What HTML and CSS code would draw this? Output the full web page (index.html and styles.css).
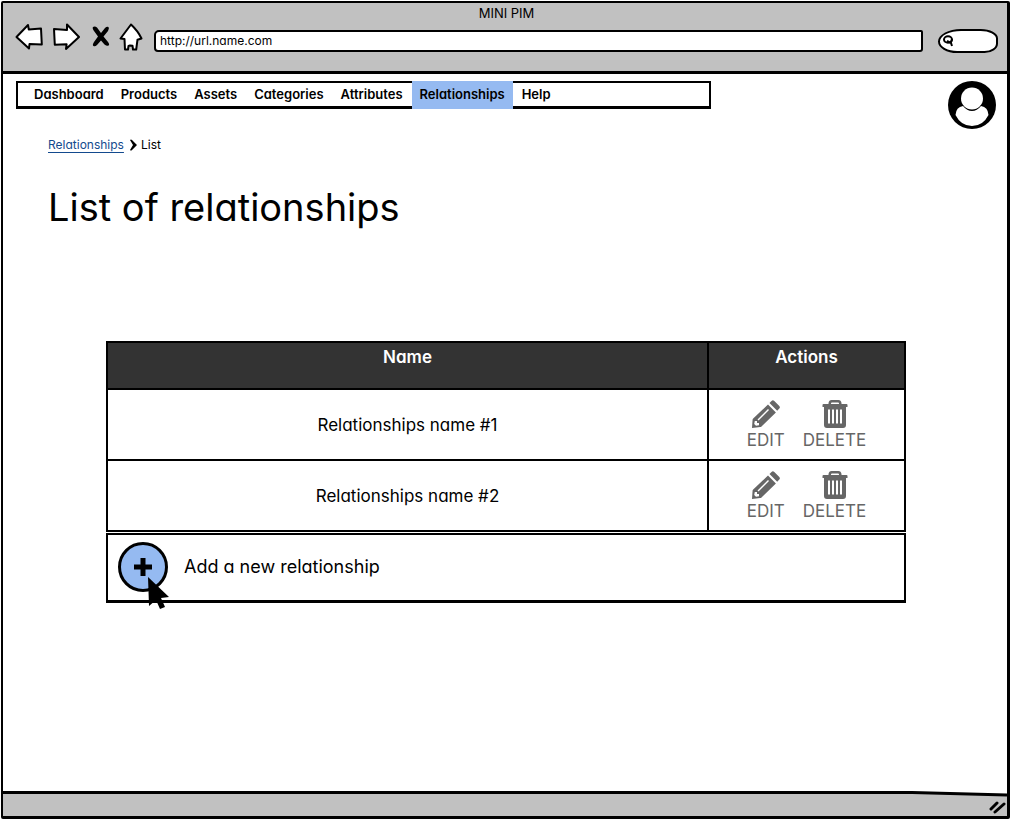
FILE: index.html
```html
<!DOCTYPE html>
<html lang="en">
<head>
<meta charset="utf-8">
<meta name="viewport" content="width=device-width, initial-scale=1">
<title>MINI PIM</title>
<link rel="stylesheet" href="styles.css">
</head>
<body>
<svg class="sprite" aria-hidden="true">
  <symbol id="pencil" viewBox="0 0 28 28">
    <path d="M17.500 3l2-2q1.400-1.400 2.800 0l5 5q1.200 1.300 0 2.600l-2.100 2.100z"/>
    <path fill-rule="evenodd" d="M16 4.500l7.900 7.900L9.500 26.500q-.5.500-1.200.6L0 28l.6-8.500q.1-.6.600-1.100zM16 9L5.500 19.500l1 1L17 10zM2.800 21l-.6 3 1.800 1.800 3-.6V23H5v-2z"/>
  </symbol>
  <symbol id="trash" viewBox="0 0 26 28">
    <path fill-rule="evenodd" d="M6.500 4V3Q7 0 9.500 0h7q2.500 0 3 3v1h5q1 0 1 1v2H.5V5q0-1 1-1zm2.500 0h8V3.500q0-1-1-1h-6q-1 0-1 1z"/>
    <path fill-rule="evenodd" d="M2 6.500h22V25q0 3-3 3H5q-3 0-3-3zM6 9.500v14h2v-14zm4 0v14h2v-14zm4 0v14h2v-14zm4 0v14h2v-14z"/>
  </symbol>
</svg>
<div class="window">
  <header class="chrome">
    <div class="chrome-title">MINI PIM</div>
    <div class="toolbar">
      <div class="controls">
        <button class="tool" aria-label="Back"><svg width="28" height="28" viewBox="0 0 28 28"><path class="outline" d="M1.500 14L13 2l.8 4.500L26 5.500l.8 16-12.300-.5-.5 4.500z"/></svg></button>
        <button class="tool" aria-label="Forward"><svg width="28" height="28" viewBox="0 0 28 28"><path class="outline" d="M27 14L15 1.500V7L2 6l.8 15.800 11.800-.5L14 26z"/></svg></button>
        <button class="tool tool-stop" aria-label="Stop"><svg width="18" height="22" viewBox="0 0 18 22"><path d="M1 1q2-1 4 .5L9 7l4-5q2-2 3.500-1 1 1-.5 4l-4.500 5.500L16 16q2 3 .5 3.500-1.500 1-4-1L9 14.500 5 19q-2 2-3.500 1t.5-4l4-5.500L2 5Q0 2 1 1z"/></svg></button>
        <button class="tool" aria-label="Home"><svg width="24" height="28" viewBox="0 0 24 28"><path class="outline" d="M12 1.500L1.500 15.500l4 .6.5 10.400h3l.5-3.500 1.500-.5 2.500.2.500 3.800h3.200l1.300-9.800 4-1.200Q19 8 12 1.500z"/></svg></button>
      </div>
      <input class="address" type="text" value="http://url.name.com" aria-label="Address">
      <div class="search">
        <svg width="12" height="14" viewBox="0 0 12 14" aria-hidden="true"><ellipse cx="6" cy="5.500" rx="4" ry="3.200"/><path d="M5 7l4 2 1 3M10 5L9 8"/></svg>
        <input class="search-input" type="search" aria-label="Search">
      </div>
    </div>
  </header>
  <div class="page">
    <div class="topbar">
      <nav class="menu" aria-label="Main">
        <a href="#">Dashboard</a>
        <a href="#">Products</a>
        <a href="#">Assets</a>
        <a href="#">Categories</a>
        <a href="#">Attributes</a>
        <a class="active" href="#" aria-current="page">Relationships</a>
        <a href="#">Help</a>
      </nav>
      <button class="account" aria-label="Account"><svg width="48" height="48" viewBox="0 0 48 48"><circle cx="24" cy="24" r="24"/><path fill="#fff" d="M7.500 34Q8 26 15 25q4 5 9 5t9-5q7 1 7.500 9Q35 45 24 45T7.500 34z"/><circle cx="24" cy="17.500" r="11" fill="#fff"/></svg></button>
    </div>
    <main class="content">
      <nav class="crumbs" aria-label="Breadcrumb">
        <a href="#">Relationships</a>
        <svg width="7" height="12" viewBox="0 0 7 12" aria-hidden="true"><path d="M0 1q1-1 2 0l5 5-5 5q-1 1-2 0l3-5z"/></svg>
        <span>List</span>
      </nav>
      <h1>List of relationships</h1>
      <div class="listing">
        <table>
          <thead>
            <tr><th scope="col">Name</th><th scope="col" class="col-actions">Actions</th></tr>
          </thead>
          <tbody>
            <tr>
              <td>Relationships name #1</td>
              <td><div class="actions">
                <button class="action"><svg width="28" height="28" aria-hidden="true"><use href="#pencil"/></svg>EDIT</button>
                <button class="action"><svg width="26" height="28" aria-hidden="true"><use href="#trash"/></svg>DELETE</button>
              </div></td>
            </tr>
            <tr>
              <td>Relationships name #2</td>
              <td><div class="actions">
                <button class="action"><svg width="28" height="28" aria-hidden="true"><use href="#pencil"/></svg>EDIT</button>
                <button class="action"><svg width="26" height="28" aria-hidden="true"><use href="#trash"/></svg>DELETE</button>
              </div></td>
            </tr>
          </tbody>
        </table>
        <div class="add-row">
          <button class="add" id="add" aria-labelledby="add-label">
            <svg width="20" height="20" viewBox="0 0 20 20" aria-hidden="true"><path d="M10 1v18M1 10h18"/></svg>
            <svg class="pointer" width="21" height="32" viewBox="0 0 21 32" aria-hidden="true"><path d="M0 0l21 20-8 1 4 9-5 2-4-9-7 6z"/></svg>
          </button>
          <label id="add-label" for="add">Add a new relationship</label>
        </div>
      </div>
    </main>
  </div>
  <footer class="statusbar">
    <svg class="edge" viewBox="0 0 1005 8" preserveAspectRatio="none" aria-hidden="true"><path class="paper" d="M0 0H1005V4L910 1.500H0z"/><path class="line" d="M0 1.500H910L1005 4"/></svg>
    <svg class="grip" width="17" height="14" viewBox="0 0 17 14" aria-hidden="true"><path d="M2 9l6-6M6 12l9-8"/></svg>
  </footer>
</div>
</body>
</html>
```
FILE: styles.css
```css
* {
  box-sizing: border-box;
}

body {
  margin: 0;
  padding: 1px;
  background: #fff;
  color: #000;
  font-family: Inter, "Open Sans", sans-serif;
  font-feature-settings: "cv11", "ss03";
  font-size: 12px;
  line-height: 16px;
}

button,
input {
  font: inherit;
  font-feature-settings: inherit;
  color: inherit;
}

button {
  padding: 0;
  border: 0;
  background: none;
  cursor: pointer;
}

svg {
  display: block;
}

.sprite {
  position: absolute;
  width: 0;
  height: 0;
}

.window {
  display: flex;
  flex-direction: column;
  min-height: calc(100vh - 2px);
  border: 3px solid #000;
  border-width: 2px 3px 3px 2px;
  border-radius: 2px;
}

.chrome {
  padding: 2px 9px 18px 12px;
  background: #c1c1c1;
  border-bottom: 3px solid #000;
}

.chrome-title {
  font-size: 13px;
  text-align: center;
}

.toolbar {
  display: flex;
  align-items: center;
  margin-top: 2px;
}

.controls {
  display: flex;
  align-items: center;
  gap: 9px;
  padding-bottom: 2px;
}

.tool-stop {
  margin-left: 3px;
}

.outline {
  fill: #fff;
  stroke: #000;
  stroke-width: 2;
  stroke-linejoin: round;
}

.address {
  flex: 1;
  min-width: 0;
  height: 22px;
  margin: 6px 15px 0 11px;
  padding: 0 4px 1px;
  background: #fff;
  border: 2px solid #000;
  border-radius: 5px 2px 3px 4px;
}

.search {
  display: flex;
  align-items: center;
  width: 60px;
  height: 24px;
  margin-top: 6px;
  padding: 0 2px;
  background: #fff;
  border: 2px solid #000;
  border-radius: 24px 18px 14px 20px / 13px 10px 10px 12px;
}

.search svg {
  flex: none;
  fill: none;
  stroke: #000;
  stroke-width: 2;
}

.search-input {
  width: 100%;
  min-width: 0;
  border: 0;
  background: none;
}

.page {
  flex: 1;
}

.topbar {
  display: flex;
  align-items: flex-start;
  justify-content: space-between;
  padding: 7px 11px 0 13px;
}

.menu {
  display: flex;
  gap: 1px;
  flex: 0 1 695px;
  height: 28px;
  padding-left: 8px;
  border: 2px solid #000;
  border-bottom-width: 3px;
  font-size: 13px;
  font-weight: 600;
}

.menu a {
  margin: -2px 0 -3px;
  padding: 5px 8px;
  color: inherit;
  text-decoration: none;
}

.menu .active {
  background: #95baf1;
}

.content {
  padding: 8px 43px 40px 45px;
}

.crumbs {
  display: flex;
  align-items: center;
  gap: 4px;
}

.crumbs svg {
  margin-left: 2px;
}

.crumbs a {
  color: #134a8e;
  text-underline-offset: 3px;
}

h1 {
  margin: 30px 0 0;
  font-size: 38px;
  font-weight: 400;
  line-height: 48px;
}

.listing {
  max-width: 800px;
  margin: 110px auto 0;
}

table {
  width: 100%;
  table-layout: fixed;
  border-collapse: collapse;
  font-size: 17px;
  line-height: 20px;
}

th,
td {
  border: 2px solid #000;
  text-align: center;
}

th {
  height: 47px;
  padding: 4px 0;
  background: #333;
  color: #fff;
  font-weight: 600;
  vertical-align: top;
}

td {
  height: 71px;
  padding: 0;
}

.col-actions {
  width: 197px;
}

.actions {
  display: flex;
  justify-content: center;
  gap: 18px;
}

.action {
  display: flex;
  flex-direction: column;
  align-items: center;
  gap: 2px;
  color: #666;
}

.action svg {
  fill: #666;
}

.add-row {
  display: flex;
  align-items: center;
  gap: 16px;
  height: 70px;
  margin-top: 1px;
  padding: 0 10px 2px;
  border: 2px solid #000;
  border-bottom-width: 3px;
  font-size: 18px;
  line-height: 24px;
}

.add {
  position: relative;
  display: grid;
  place-items: center;
  width: 50px;
  height: 50px;
  border: 3px solid #000;
  border-radius: 50%;
  background: #95baf1;
}

.add path {
  stroke: #000;
  stroke-width: 5;
}

.add .pointer {
  position: absolute;
  left: 27px;
  top: 32px;
}

.add .pointer path {
  stroke: none;
}

.statusbar {
  display: flex;
  justify-content: flex-end;
  position: relative;
  height: 25px;
  padding: 9px 1px 0;
  background: #c1c1c1;
}

.edge {
  position: absolute;
  inset: 0 0 auto;
  width: 100%;
  height: 8px;
}

.paper {
  fill: #fff;
}

.line {
  fill: none;
  stroke: #000;
  stroke-width: 3;
}

.grip {
  fill: none;
  stroke: #000;
  stroke-width: 3;
  stroke-linecap: round;
}
```
